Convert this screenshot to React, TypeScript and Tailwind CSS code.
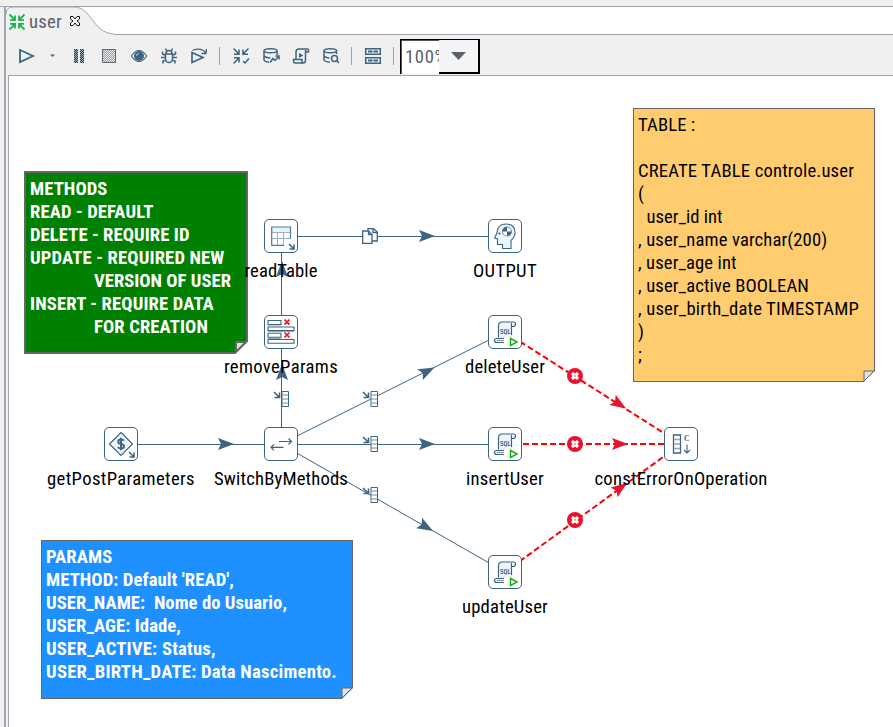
import React, { useLayoutEffect, useRef, useState } from "react";

const STEEL = "#3d6480";

/* One line of condensed text, spaced out or tightened to an exact width. */
function Line({ text, width, className = "" }: { text: string; width: number; className?: string }) {
  const ref = useRef<HTMLSpanElement>(null);
  const [spacing, setSpacing] = useState(0);
  const [scale, setScale] = useState(1);
  useLayoutEffect(() => {
    if (!ref.current) return;
    const natural = ref.current.getBoundingClientRect().width;
    const needed = width / natural;
    if (needed > 0.93 && needed < 1.12) setSpacing((width - natural) / text.length);
    else setScale(needed);
  }, []);
  return (
    <span
      ref={ref}
      className={"inline-block origin-left whitespace-pre " + className}
      style={{ letterSpacing: spacing, transform: scale === 1 ? undefined : `scaleX(${scale})` }}
    >
      {text}
    </span>
  );
}

type NoteLine = { t: string; w: number; indent?: number };

function Note({
  place,
  lines,
  fold,
  stroke,
}: {
  place: string;
  lines: NoteLine[];
  fold: number;
  stroke: number;
}) {
  return (
    <div className={"absolute flex flex-col border-[#666666] text-[18.67px] leading-[23px] " + place}>
      {lines.map((l, i) => (
        <div key={i} className="h-[23px] whitespace-pre" style={{ paddingLeft: l.indent }}>
          {l.t && <Line text={l.t} width={l.w} />}
        </div>
      ))}
      <svg className="absolute -right-[2px] -bottom-[2px]" width={fold + 2} height={fold + 2}>
        <path d={`M0 ${fold + 2} H${fold + 2} V0 Z`} fill="#fff" />
        <path
          d={`M1 1 H${fold} L1 ${fold} Z`}
          fill="#e0e0e0"
          stroke="#666666"
          strokeWidth={stroke}
        />
      </svg>
    </div>
  );
}

function SqlIcon() {
  return (
    <svg width="32" height="32" fill="none" stroke={STEEL} strokeWidth="1.2">
      <path d="M10 22 V9 Q10 6 13 6 H23 V22 H10" fill="#eaf5fc" stroke="none" />
      <path d="M9.500 21.500 V10 Q9.500 6 13 6 H24 Q26.500 6 26.500 8 Q26.500 10.500 24 10.500 H22.500 V19" />
      <path d="M22.500 10.500 V7" />
      <path d="M15 22.500 H7 Q5.300 23 5.500 24.500 Q5.500 26.500 8 26.500 H15" />
      <path d="M8 24.500 H15" strokeWidth="0.7" />
      <text x="11" y="18" fontSize="6.500" fill={STEEL} stroke="none" fontFamily="Roboto" fontWeight="600" textLength="10.500">SQL</text>
      <path d="M21.500 22.500 L28 26 L21.500 29.500 Z" fill="#fff" stroke="#12b312" strokeWidth="1.500" />
    </svg>
  );
}

function CornerArrow() {
  return <path d="M24 24 L28.500 28.500 M29 24.500 V29 H24.500" stroke={STEEL} strokeWidth="1.500" fill="none" />;
}

const icons: Record<string, React.ReactNode> = {
  sql: <SqlIcon />,
  table: (
    <svg width="32" height="32" fill="none" stroke="#9db1c0" strokeWidth="1">
      <path d="M7 7 H26 V12 H7 Z" fill="#e4f3fc" stroke="none" />
      <path d="M7 12.500 H26 M7 18.500 H25 M12.500 12.500 V25 M18.500 12.500 V25" />
      <path d="M25.500 19 V7 H6.700 V25.300 H19" stroke="#557a93" strokeWidth="1.200" />
      <CornerArrow />
    </svg>
  ),
  remove: (
    <svg width="32" height="32" fill="none" stroke={STEEL} strokeWidth="1.100">
      <path d="M3 4.500 H16 V8.500 H3 Z M3 17.200 H16 V21.200 H3 Z M3 11 H29 V14.500 H3 Z M3 23.500 H29 V27.300 H3 Z" fill="#fff" />
      <path d="M3 15.500 H29 M3 10 H16 M3 22.500 H16" stroke="#8ca5b7" />
      <path d="M19.500 3.700 L24.500 8.700 M24.500 3.700 L19.500 8.700 M19.500 16.500 L24.500 21.500 M24.500 16.500 L19.500 21.500" stroke="#e8142d" strokeWidth="1.700" />
    </svg>
  ),
  head: (
    <svg width="32" height="32" fill="none" stroke={STEEL} strokeWidth="1.100">
      <path d="M13.500 28.500 V24.500 H8.500 V19 L5.500 18 L8 13 Q8.500 4 17 4 Q26 4 26 13 Q26 17 22 20.500 V28.500 Z" fill="#eaf5fc" />
      <circle cx="18" cy="11.500" r="4.500" fill="#fff" stroke="#7690a4" />
      <path d="M18 11.500 V7 A4.500 4.500 0 0 0 13.500 11.500 Z M18 11.500 V16 A4.500 4.500 0 0 0 22.500 11.500 Z" fill={STEEL} stroke="none" />
      <circle cx="10.500" cy="13.500" r="1.100" fill={STEEL} stroke="none" />
    </svg>
  ),
  dollar: (
    <svg width="32" height="32" fill="none" stroke={STEEL} strokeWidth="1.200">
      <path d="M16 4.500 L27.500 16 L16 27.500 L4.500 16 Z" fill="#eef6fb" />
      <path d="M19 12.700 Q18.500 11.500 16 11.500 Q13.200 11.500 13.200 13.700 Q13.200 15.500 16 16 Q19 16.500 19 18.600 Q19 20.500 16 20.500 Q13.500 20.500 13 19 M16 9.800 V22.200" strokeWidth="1.900" />
      <CornerArrow />
    </svg>
  ),
  switch: (
    <svg width="32" height="32" fill="none" stroke={STEEL} strokeWidth="1.200">
      <path d="M14 13.500 H26.500 M23.500 10.500 L26.500 13.500 L23.500 16.500 M18.500 19.300 H6 M9 16.300 L6 19.300 L9 22.300" />
    </svg>
  ),
  constant: (
    <svg width="32" height="32" fill="none" stroke={STEEL} strokeWidth="1.300">
      <path d="M8.500 7 H15.500 V25 H8.500 Z" fill="#fff" />
      <path d="M9 11.500 H15 M9 16 H15 M9 20.500 H15" stroke="#8ca5b7" />
      <text x="19" y="13.300" fontSize="9" fill={STEEL} stroke="none" fontFamily="Liberation Serif" fontWeight="700" textLength="5.500" lengthAdjust="spacingAndGlyphs">C</text>
      <path d="M22 16.500 V25 M19 22 L22 25 L25 22" strokeWidth="1.100" />
    </svg>
  ),
};

const nodes = [
  { icon: "table", label: "readTable", w: 73, place: "left-[231px] top-[219px]" },
  { icon: "head", label: "OUTPUT", w: 64, place: "left-[455px] top-[219px]" },
  { icon: "remove", label: "removeParams", w: 114, place: "left-[231px] top-[315px]" },
  { icon: "sql", label: "deleteUser", w: 80, place: "left-[455px] top-[315px]" },
  { icon: "dollar", label: "getPostParameters", w: 148, place: "left-[71px] top-[427px]" },
  { icon: "switch", label: "SwitchByMethods", w: 134, place: "left-[231px] top-[427px]" },
  { icon: "sql", label: "insertUser", w: 78, place: "left-[455px] top-[427px]" },
  { icon: "constant", label: "constErrorOnOperation", w: 173, place: "left-[631px] top-[427px]" },
  { icon: "sql", label: "updateUser", w: 86, place: "left-[455px] top-[555px]" },
];

function Head({ x, y, angle, color = STEEL }: { x: number; y: number; angle: number; color?: string }) {
  return <path d="M0 0 L-16 -6 L-13 0 L-16 6 Z" fill={color} transform={`translate(${x} ${y}) rotate(${angle})`} />;
}

function Target({ x, y }: { x: number; y: number }) {
  return (
    <g transform={`translate(${x} ${y})`} fill="none" stroke={STEEL}>
      <path d="M9 .5 H15.500 V15.500 H9 Z" fill="#fff" />
      <path d="M9.500 4 H15 M9.500 8 H15 M9.500 12 H15" stroke="#6f8b9f" />
      <path d="M1 1 L6 6 M6.500 1.500 V6.500 H1.500" strokeWidth="1.600" />
    </g>
  );
}

function Hops() {
  return (
    <svg className="absolute inset-0" width="893" height="727" fill="none">
      <g stroke={STEEL} strokeWidth="1">
        <path d="M281.500 236.500 H505 M121 444.500 H505 M281.500 236 V444" />
        <path d="M281 444 L505 332 M281 444 L505 572" />
      </g>
      <Head x={435} y={236} angle={0} />
      <Head x={234} y={444} angle={0} />
      <Head x={435} y={444} angle={0} />
      <Head x={282} y={261} angle={-90} />
      <Head x={282} y={364} angle={-90} />
      <Head x={434.500} y={367.500} angle={-26.500} />
      <Head x={433} y={531} angle={29.700} />
      <g transform="translate(362 228)" stroke={STEEL} strokeWidth="1.300" fill="#fff">
        <path d="M6 .7 H11.500 L15.300 4 V13 H6 Z" />
        <path d="M.7 3 H6.500 L10 6.500 V15.300 H.7 Z" />
        <path d="M6.500 3 V6.500 H10 M11 1 V4.500 H15" fill="none" />
      </g>
      <Target x={273} y={391} />
      <Target x={362} y={391} />
      <Target x={362} y={436} />
      <Target x={362} y={487} />
      <path d="M505 332 L681 444 M505 444 H681 M505 572 L681 444" stroke="#ff0000" strokeWidth="2" strokeDasharray="6 3" />
      <Head x={626} y={408.500} angle={32.500} color="#e8142d" />
      <Head x={628} y={444} angle={0} color="#e8142d" />
      <Head x={627} y={483} angle={-36} color="#e8142d" />
      {[376, 444, 520].map((y) => (
        <g key={y} transform={`translate(575 ${y})`}>
          <circle r="8" fill="#e8142d" />
          <path d="M-4 -2 L-2 -4 L0 -2.500 L2 -4 L4 -2 L2.500 0 L4 2 L2 4 L0 2.500 L-2 4 L-4 2 L-2.500 0 Z" fill="#fff" />
          <circle r="0.700" fill="#e8142d" />
        </g>
      ))}
    </svg>
  );
}

function Tool({ children, className = "w-[30px]" }: { children?: React.ReactNode; className?: string }) {
  return (
    <div className={"flex shrink-0 items-center justify-center " + className}>
      <svg width="20" height="20" viewBox="0 0 20 20" fill="none" stroke={STEEL} strokeWidth="1.500" className="shrink-0">
        {children}
      </svg>
    </div>
  );
}

function Separator({ className = "w-3" }: { className?: string }) {
  return (
    <div className={"flex shrink-0 justify-center " + className}>
      <div className="h-[18px] w-px bg-[#9ea5ae]" />
    </div>
  );
}

const inward = "M2.500 2.500 L8 8 M8 3.500 V8.200 H3 M17.500 2.500 L12 8 M12 3.500 V8.200 H17 M2.500 17.500 L8 12 M3 11.800 H8 V16.500";

function Toolbar() {
  return (
    <div className="flex h-[39px] shrink-0 items-center bg-[#f0f0f0] pt-[3px] pl-[5px]">
      <Tool><path d="M4 4 L17 10 L4 16 Z" strokeWidth="1.800" /></Tool>
      <Tool className="w-[23px]"><path d="M7 8.500 H12 L9.500 11 Z" fill="#5c5f68" stroke="none" /></Tool>
      <Tool>
        <defs>
          <pattern id="dither" width="2" height="2" patternUnits="userSpaceOnUse">
            <path d="M0 0 H1 V1 H0 Z M1 1 H2 V2 H1 Z" fill="#26475f" stroke="none" />
          </pattern>
          <pattern id="soft" width="2" height="2" patternUnits="userSpaceOnUse">
            <path d="M0 0 H1 V1 H0 Z M1 1 H2 V2 H1 Z" fill="#a3a3a3" stroke="none" />
          </pattern>
        </defs>
        <path d="M5 3 H9 V17 H5 Z M11 3 H15 V17 H11 Z" fill="#9aa4ac" stroke="none" />
        <path d="M5 3 H9 V17 H5 Z M11 3 H15 V17 H11 Z" fill="url(#dither)" stroke="none" />
      </Tool>
      <Tool>
        <path d="M3 3 H17 V17 H3 Z" fill="#e4e4e4" stroke="none" />
        <path d="M3 3 H17 V17 H3 Z" fill="url(#soft)" stroke="none" />
        <path d="M3.500 3.500 H16.500 V16.500 H3.500 Z" stroke="#5d6973" strokeWidth="1" />
      </Tool>
      <Tool>
        <path d="M2.300 10 Q6 4.500 10 4.500 Q14 4.500 17.700 10 Q14 15.500 10 15.500 Q6 15.500 2.300 10 Z" fill="#f0f0f0" strokeWidth="1.200" />
        <circle cx="10" cy="10" r="5" fill={STEEL} stroke="none" />
        <path d="M7.500 10 A2.500 2.500 0 0 1 10 7.500" stroke="#b8cbd8" strokeWidth="1" />
      </Tool>
      <Tool>
        <path d="M6.500 8 H13.500 V13 Q13 16.500 10 16.500 Q7 16.500 6.500 13 Z M7 7.500 Q7 4.500 10 4.500 Q13 4.500 13 7.500 M7.500 4.500 L6.500 2.500 M12.500 4.500 L13.500 2.500 M6 9 L3.500 8 V5.500 M14 9 L16.500 8 V5.500 M6 11.500 H2 M14 11.500 H18 M7 14 L4 15 V17.500 M13 14 L16 15 V17.500" />
      </Tool>
      <Tool>
        <path d="M3 6.500 V16.500 L14 11.500 Z" strokeWidth="1.700" />
        <path d="M3.500 4.500 Q12 1 16.500 6.500 M17.500 3 L17 7.500 L12.500 7.500" strokeWidth="1.300" />
      </Tool>
      <Separator className="w-[11px]" />
      <Tool className="w-[31px] pl-px">
        <path d={inward} strokeWidth="1.500" />
        <path d="M12 15 L14 17 L18 12.500" />
      </Tool>
      <Tool>
        <path d="M16 9 V5 M3 5 V14 Q4 16 8 16.200 M3 10 Q5 12 9.500 12" />
        <ellipse cx="9.500" cy="4.800" rx="6.500" ry="2" />
        <path d="M9 16.500 L12 12.500 L14 14.500 L17.500 10.500 M14.500 10 H18 V13.500" />
      </Tool>
      <Tool>
        <path d="M5 13 V6 Q5 3 8 3 H16 Q17.500 3 17.500 5 V6 H14.500 V14 Q14.500 17 12 17 H4 Q2.500 17 2.500 15 V13.500 H11 V15 Q11 17 12.500 17 M14.500 6 V4" />
        <path d="M8 7 L12.300 9.500 L8 12 Z" fill={STEEL} stroke="none" />
      </Tool>
      <Tool>
        <path d="M15.500 8 V5 M3 5 V14 Q4 16 9 16.200 M3 10 Q5 12 8.500 12" />
        <ellipse cx="9.300" cy="4.800" rx="6.300" ry="2" />
        <circle cx="13.500" cy="12.500" r="3" />
        <path d="M15.500 14.500 L18 17" />
      </Tool>
      <Separator className="w-[11px]" />
      <Tool className="w-[31px] pl-px">
        <path d="M2.700 2.700 H17.300 V8.300 H2.700 Z M2.700 11.700 H17.300 V17.300 H2.700 Z" />
        <path d="M5 5.500 H15 M5 14.500 H15" strokeWidth="2" />
        <path d="M10 4 V7 M10 13 V16" stroke="#f0f0f0" strokeWidth="1" />
      </Tool>
      <Separator className="w-[11px]" />
      <div className="ml-px flex h-[35px] w-20 shrink-0 border-t border-l border-black">
        <div className="flex w-[38px] items-center overflow-hidden border-t border-l border-[#555] bg-white pl-[3px] text-[18.67px] leading-[23px] text-[#5c616c]">
          <Line text="100%" width={42} />
        </div>
        <div className="flex flex-1 items-center justify-center border-r-2 border-b-2 border-black bg-[#f3f4f5]">
          <svg width="16" height="10"><path d="M0 1 H15 L7.500 9 Z" fill="#5c616c" /></svg>
        </div>
      </div>
    </div>
  );
}

export default function App() {
  return (
    <div className="relative flex h-[727px] w-[893px] flex-col overflow-hidden bg-[#f0f0f0] font-['Roboto_Condensed',Roboto,sans-serif] [font-stretch:75%]">
      <div className="h-[6px] shrink-0" />
      <div className="flex min-h-0 flex-1">
        <div className="w-1 shrink-0 border-t border-[#9ea5ae]" />
        <div className="flex min-w-0 flex-1 flex-col border-l-2 border-[#9ea5ae]">
          <div className="relative h-[29px] shrink-0 border-t border-b border-[#9ea5ae] bg-white">
            <svg className="absolute -top-px left-0" width="120" height="29">
              <path d="M0 29 V7 Q0 1 7 1 H68 C86 1 86 27 108 28 V29 Z" fill="#f0f0f0" />
              <path d="M0 8 Q0 1 7 1 H68 C86 1 86 27 108 28" fill="none" stroke="#9ea5ae" />
            </svg>
            <div className="relative flex h-[29px] items-center text-[18.67px] leading-[23px] text-[#5c616c]">
              <svg width="20" height="20" className="ml-px" fill="none" stroke="#22b14c" strokeWidth="1.800">
                <path d={inward + " M17.500 17.500 L12 12 M12 16.500 V11.800 H17"} />
              </svg>
              <span className="ml-[2px] pt-px"><Line text="user" width={33} /></span>
              <svg width="12" height="12" className="ml-[7px] -mt-[2px]" fill="#fff" stroke="#111" strokeWidth="1">
                <path d="M1.500 1.500 H4 L6 4 L8 1.500 H10.500 V4 L8 6 L10.500 8 V10.500 H8 L6 8 L4 10.500 H1.500 V8 L4 6 L1.500 4 Z" />
              </svg>
            </div>
          </div>
          <div className="-mt-px flex h-px shrink-0 justify-start"><div className="relative w-[104px] bg-[#f0f0f0]" /></div>
          <Toolbar />
          <div className="mt-px ml-[2px] flex-1 border-t border-l border-[#9ea5ae] bg-white" />
        </div>
      </div>

      <Note
        place="left-6 top-[171px] h-[183px] w-56 border-2 bg-[#008000] pl-1 pt-[4.500px] font-bold text-white"
        fold={11}
        stroke={2}
        lines={[
          { t: "METHODS", w: 77.5 },
          { t: "READ - DEFAULT", w: 123.5 },
          { t: "DELETE - REQUIRE ID", w: 159.5 },
          { t: "UPDATE - REQUIRED NEW", w: 194.5 },
          { t: "VERSION OF USER", w: 137, indent: 64 },
          { t: "INSERT - REQUIRE DATA", w: 183.8 },
          { t: "FOR CREATION", w: 114, indent: 64 },
        ]}
      />
      <Note
        place="left-[633px] top-[108px] h-[274px] w-[242px] border bg-[#ffcd70] pl-1 pt-[4.500px] text-black"
        fold={11}
        stroke={1}
        lines={[
          { t: "TABLE :", w: 57.3 },
          { t: "", w: 0 },
          { t: "CREATE TABLE controle.user", w: 216 },
          { t: "(", w: 6.3 },
          { t: "  user_id int", w: 84.6 },
          { t: ", user_name varchar(200)", w: 189.3 },
          { t: ", user_age int", w: 98.6 },
          { t: ", user_active BOOLEAN", w: 171 },
          { t: ", user_birth_date TIMESTAMP", w: 221 },
          { t: ")", w: 6.3 },
          { t: ";", w: 4.2 },
        ]}
      />
      <Note
        place="left-[41px] top-[540px] h-[159px] w-[312px] border bg-[#1e90ff] pl-1 pt-[4.500px] font-bold text-white"
        fold={11}
        stroke={1}
        lines={[
          { t: "PARAMS", w: 66.5 },
          { t: "METHOD: Default 'READ',", w: 188 },
          { t: "USER_NAME:  Nome do Usuario,", w: 241 },
          { t: "USER_AGE: Idade,", w: 135 },
          { t: "USER_ACTIVE: Status,", w: 169.7 },
          { t: "USER_BIRTH_DATE: Data Nascimento.", w: 291 },
        ]}
      />

      <Hops />
      {nodes.map((n) => (
        <div key={n.label} className={"absolute flex w-[100px] flex-col items-center " + n.place}>
          <div className="h-[34px] w-[34px] shrink-0 rounded-[5px] border border-[#3d6480] bg-white">{icons[n.icon]}</div>
          <div className="mt-[7px] flex shrink-0 justify-start text-[18.67px] leading-[23px] text-black" style={{ width: n.w }}>
            <Line text={n.label} width={n.w} />
          </div>
        </div>
      ))}
    </div>
  );
}
